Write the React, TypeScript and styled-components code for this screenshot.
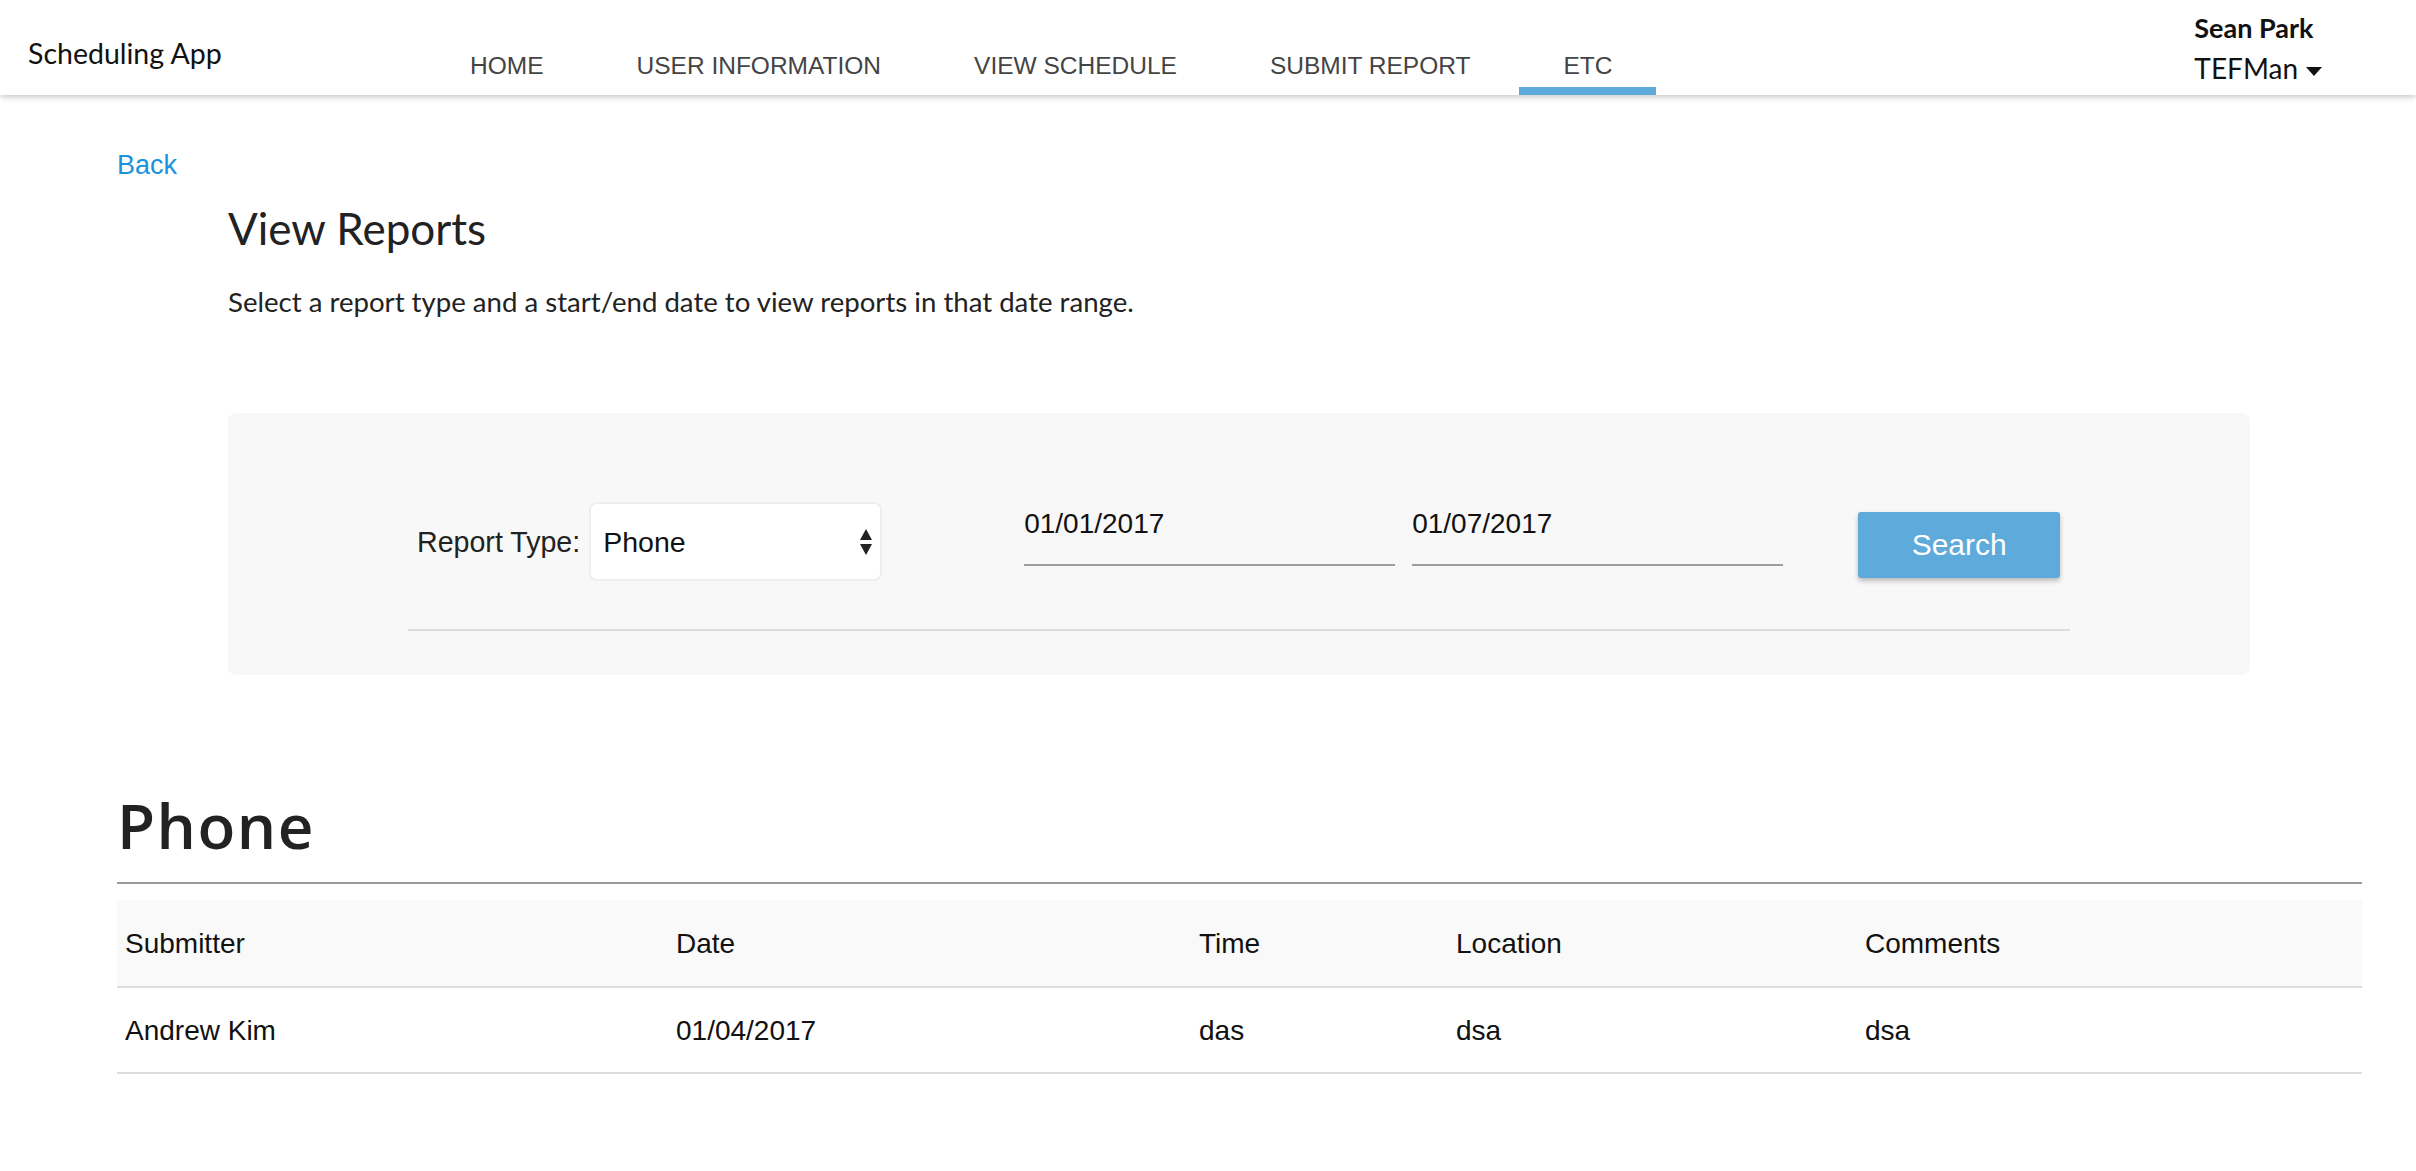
import React, { useState } from 'react';
import styled, { createGlobalStyle } from 'styled-components';

const GlobalStyle = createGlobalStyle`
  body {
    margin: 0;
    background: #fff;
    font-family: 'Liberation Sans', Arial, sans-serif;
    color: #222;
  }
  * { box-sizing: border-box; }
`;

const avenir = `'Lato', 'Noto Sans', sans-serif`;
const helvetica = `'Liberation Sans', Arial, sans-serif`;

const navItems = ['HOME', 'USER INFORMATION', 'VIEW SCHEDULE', 'SUBMIT REPORT', 'ETC'];

const reports = [
  { submitter: 'Andrew Kim', date: '01/04/2017', time: 'das', location: 'dsa', comments: 'dsa' },
];

const columns = [
  { key: 'submitter', label: 'Submitter', width: 551 },
  { key: 'date', label: 'Date', width: 523 },
  { key: 'time', label: 'Time', width: 257 },
  { key: 'location', label: 'Location', width: 409 },
  { key: 'comments', label: 'Comments', width: 505 },
] as const;

const App: React.FC = () => {
  const [active] = useState('ETC');
  const [type, setType] = useState('Phone');
  const [start, setStart] = useState('01/01/2017');
  const [end, setEnd] = useState('01/07/2017');

  return (
    <>
      <GlobalStyle />
      <Header>
        <Brand>Scheduling App</Brand>
        <Nav>
          {navItems.map((item) => (
            <NavItem key={item} $active={item === active}>
              {item}
            </NavItem>
          ))}
        </Nav>
        <User>
          <UserName>Sean Park</UserName>
          <UserRole>
            TEFMan
            <svg width="16" height="9" viewBox="0 0 16 9">
              <path d="M0 0 L16 0 L8 9 Z" fill="#111" />
            </svg>
          </UserRole>
        </User>
      </Header>

      <Main>
        <BackLink href="#">Back</BackLink>
        <Intro>
          <Title>View Reports</Title>
          <Subtitle>Select a report type and a start/end date to view reports in that date range.</Subtitle>

          <Panel>
            <Controls>
              <Label>Report Type:</Label>
              <SelectBox>
                <Select value={type} onChange={(e) => setType(e.target.value)}>
                  <option>Phone</option>
                  <option>Email</option>
                  <option>Visit</option>
                </Select>
                <SelectArrows width="14" height="28" viewBox="0 0 14 28">
                  <path d="M7 1 L13 12 L1 12 Z" fill="#222" />
                  <path d="M1 16 L13 16 L7 27 Z" fill="#222" />
                </SelectArrows>
              </SelectBox>
              <DateInput $ml={142} value={start} onChange={(e) => setStart(e.target.value)} />
              <DateInput $ml={17} value={end} onChange={(e) => setEnd(e.target.value)} />
              <SearchButton>Search</SearchButton>
            </Controls>
            <Divider />
          </Panel>
        </Intro>

        <ReportTitle>{type}</ReportTitle>
        <Rule />
        <Table>
          <colgroup>
            {columns.map((c) => (
              <col key={c.key} style={{ width: c.width }} />
            ))}
          </colgroup>
          <thead>
            <tr>
              {columns.map((c) => (
                <Th key={c.key}>{c.label}</Th>
              ))}
            </tr>
          </thead>
          <tbody>
            {reports.map((r, i) => (
              <tr key={i}>
                {columns.map((c) => (
                  <Td key={c.key}>{r[c.key]}</Td>
                ))}
              </tr>
            ))}
          </tbody>
        </Table>
      </Main>
    </>
  );
};

const Header = styled.header`
  display: flex;
  height: 95px;
  background: #fff;
  box-shadow: 0 2px 6px rgba(0, 0, 0, 0.22);
`;

const Brand = styled.div`
  flex: 0 0 426px;
  padding: 36px 0 0 28px;
  font-family: ${avenir};
  font-size: 28.5px;
  line-height: 34px;
  color: #111;
`;

const Nav = styled.nav`
  display: flex;
  gap: 5px;
  height: 100%;
`;

const NavItem = styled.a<{ $active?: boolean }>`
  display: flex;
  align-items: flex-end;
  height: 100%;
  padding: 0 44px 9px;
  border-bottom: 8px solid ${(p) => (p.$active ? '#5eaadb' : 'transparent')};
  font-family: ${helvetica};
  font-size: 24.5px;
  line-height: 24px;
  color: #444;
  white-space: nowrap;
  cursor: pointer;
`;

const User = styled.div`
  margin-left: auto;
  margin-right: 94px;
  padding-top: 8px;
  display: flex;
  flex-direction: column;
  font-family: ${avenir};
  font-size: 28px;
  line-height: 40px;
  color: #111;
`;

const UserName = styled.div`
  font-weight: 700;
  font-size: 27px;
`;

const UserRole = styled.div`
  display: flex;
  align-items: center;
  gap: 8px;

  svg {
    margin-top: 6px;
  }
`;

const Main = styled.main`
  padding: 54px 54px 80px 117px;
`;

const BackLink = styled.a`
  display: inline-block;
  font-family: ${helvetica};
  font-size: 27px;
  line-height: 32px;
  color: #1a92dc;
  text-decoration: none;
`;

const Intro = styled.section`
  padding-left: 111px;
`;

const Title = styled.h2`
  margin: 22px 0 0;
  font-family: ${avenir};
  font-weight: 400;
  font-size: 44px;
  line-height: 50px;
  color: #222;
`;

const Subtitle = styled.p`
  margin: 33px 0 0;
  font-family: ${avenir};
  font-size: 27.6px;
  line-height: 32px;
  color: #222;
`;

const Panel = styled.div`
  width: 2022px;
  margin-top: 95px;
  padding: 89px 180px 44px;
  background: #f8f8f8;
  border-radius: 8px;
`;

const Controls = styled.div`
  display: flex;
  align-items: flex-start;
  padding: 0 9px;

  & > * {
    flex-shrink: 0;
  }
`;

const Label = styled.label`
  margin-top: 24px;
  font-family: ${helvetica};
  font-size: 28.6px;
  line-height: 32px;
  color: #222;
  white-space: nowrap;
`;

const SelectBox = styled.div`
  position: relative;
  width: 293px;
  height: 79px;
  margin-left: 9px;
  background: #fff;
  border: 2px solid #eee;
  border-radius: 8px;
`;

const Select = styled.select`
  appearance: none;
  width: 100%;
  height: 100%;
  padding: 0 40px 0 12px;
  border: none;
  background: transparent;
  font-family: ${helvetica};
  font-size: 28.5px;
  color: #111;
  outline: none;
`;

const SelectArrows = styled.svg`
  position: absolute;
  right: 7px;
  top: 24px;
  pointer-events: none;
`;

const DateInput = styled.input<{ $ml: number }>`
  width: 371px;
  margin: 6px 0 0 ${(p) => p.$ml}px;
  padding: 0 0 24px;
  border: none;
  border-bottom: 2px solid #9e9e9e;
  background: transparent;
  font-family: ${helvetica};
  font-size: 28px;
  line-height: 32px;
  height: 58px;
  color: #111;
  outline: none;
`;

const SearchButton = styled.button`
  width: 202px;
  height: 66px;
  margin: 10px 0 0 75px;
  border: none;
  border-radius: 3px;
  background: #5eaadb;
  box-shadow: 0 3px 5px rgba(0, 0, 0, 0.25);
  font-family: ${helvetica};
  font-size: 30px;
  color: #fff;
  cursor: pointer;
`;

const Divider = styled.div`
  margin-top: 48px;
  height: 2px;
  background: #ddd;
`;

const ReportTitle = styled.h1`
  margin: 117px 0 0;
  font-family: 'Open Sans', 'Noto Sans', sans-serif;
  font-weight: 600;
  font-size: 62px;
  letter-spacing: 1.5px;
  line-height: 66px;
  color: #222;
`;

const Rule = styled.div`
  margin-top: 24px;
  height: 2px;
  background: #9a9a9a;
`;

const Table = styled.table`
  width: 2245px;
  margin-top: 16px;
  border-collapse: collapse;
  table-layout: fixed;
`;

const Th = styled.th`
  height: 87px;
  padding: 2px 8px 0;
  text-align: left;
  font-weight: 400;
  font-family: ${helvetica};
  font-size: 28px;
  color: #111;
  background: #f9f9f9;
  border-bottom: 2px solid #ddd;
`;

const Td = styled.td`
  height: 86px;
  padding: 2px 8px 0;
  font-family: ${helvetica};
  font-size: 28px;
  color: #111;
  border-bottom: 2px solid #ddd;
`;

export default App;
